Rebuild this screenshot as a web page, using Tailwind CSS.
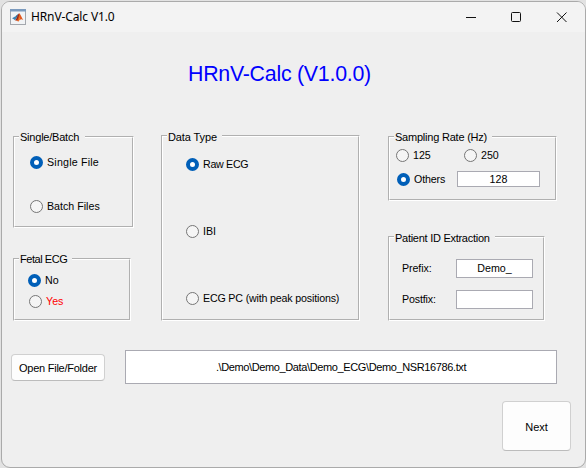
<!DOCTYPE html>
<html lang="en">
<head>
<meta charset="utf-8">
<title>HRnV-Calc V1.0</title>
<script src="https://cdn.jsdelivr.net/npm/@tailwindcss/browser@4"></script>
</head>
<body class="h-[468px] w-[586px] overflow-hidden bg-[#e2e2e2] pt-px pl-px font-['Liberation_Sans',Arial,sans-serif] text-[11px] leading-[13px] text-black">
<div class="flex h-[467px] w-[585px] flex-col overflow-hidden rounded-[9px] border border-[#aaaaaa] bg-[#efefef]">
  <!-- title bar -->
  <header class="flex h-[30px] shrink-0 items-center bg-[#f3f3f3] pl-2">
    <svg class="size-4 shrink-0" viewBox="0 0 16 16">
      <rect x=".5" y=".5" width="15" height="15" fill="#f1f3f5" stroke="#a3a7ad"/>
      <rect width="16" height="2.5" fill="#7b9abd"/>
      <path d="M2 9.3 5.5 7.2 7.2 8.8 5 11.3 3.8 10.3Z" fill="#3d83b5"/>
      <path d="M5.5 7.2 8.6 4.5 7.2 9Z" fill="#276a93"/>
      <path d="M5 11.3C7 10.5 7.4 5.5 9.2 4.2 10.8 5.5 11.6 8.8 13.4 11.3 11.5 9.8 10.5 9.7 8.2 12.8 7.4 11.4 6.5 11 5 11.3Z" fill="#e2571d"/>
      <path d="M5 11.3C7 10.5 7.7 5.8 9.2 4.2 8.8 7.4 8.2 10 6.8 11.6Z" fill="#8e2417"/>
      <path d="M9.2 4.8C9.8 7 9.4 10 8.2 12.2L9.9 10.3Z" fill="#f6a52c"/>
    </svg>
    <span class="ml-[5px] font-['Noto_Sans',sans-serif] text-[12px] leading-4 tracking-[-0.12px]">HRnV-Calc V1.0</span>
    <svg class="mr-[17px] ml-auto h-[12px] w-[102px]" viewBox="0 0 102 12" fill="none" stroke="#111">
      <path d="M0 6.5H10" shape-rendering="crispEdges"/>
      <rect x="45.5" y="1.5" width="9" height="9" rx="1"/>
      <path d="M91 1.5 100.5 11M100.5 1.5 91 11"/>
    </svg>
  </header>

  <main class="flex flex-col">
    <h1 class="mt-[30px] ml-[186px] text-[21.33px] leading-[25px] tracking-[-0.24px] whitespace-nowrap text-[#0000ff]">HRnV-Calc (V1.0.0)</h1>

    <div class="mt-[48px] flex items-end pl-[11px]">
      <div class="flex flex-col gap-[30px]">
        <section class="relative h-[92px] w-[121px] border border-[#b0b0b0] border-r-white border-b-white">
          <h2 class="absolute -top-[6px] left-[5px] w-[66px] bg-[#efefef] pl-px tracking-[-0.22px] whitespace-nowrap">Single/Batch</h2>
          <div class="h-full border border-white border-r-[#b0b0b0] border-b-[#b0b0b0] pt-[18px] pl-[15px] text-[10.67px]">
            <label class="flex items-center gap-1 tracking-[0.2px]"><i class="size-[13px] rounded-full border-4 border-[#005fb8] bg-white"></i>Single File</label>
            <label class="mt-[31px] flex items-center gap-1"><i class="size-[13px] rounded-full border border-[#767676] bg-[#f5f5f5]"></i>Batch Files</label>
          </div>
        </section>
        <section class="relative h-[63px] w-[118px] border border-[#b0b0b0] border-r-white border-b-white">
          <h2 class="absolute -top-[6px] left-[5px] w-[53px] bg-[#efefef] pl-px tracking-[-0.45px] whitespace-nowrap">Fetal ECG</h2>
          <div class="h-full border border-white border-r-[#b0b0b0] border-b-[#b0b0b0] pt-[14px] pl-[13px] text-[10.67px]">
            <label class="flex items-center gap-1"><i class="size-[13px] rounded-full border-4 border-[#005fb8] bg-white"></i>No</label>
            <label class="mt-[8px] ml-px flex items-center gap-1 text-[#ff0000]"><i class="size-[13px] rounded-full border border-[#767676] bg-[#f5f5f5]"></i>Yes</label>
          </div>
        </section>
      </div>

      <section class="relative ml-[27px] h-[186px] w-[199px] border border-[#b0b0b0] border-r-white border-b-white">
        <h2 class="absolute -top-[5px] left-[5px] w-[55px] bg-[#efefef] pl-px tracking-[-0.1px] whitespace-nowrap">Data Type</h2>
        <div class="h-full border border-white border-r-[#b0b0b0] border-b-[#b0b0b0] pt-[21px] pl-[23px] text-[10.67px]">
          <label class="flex items-center gap-1 tracking-[-0.3px]"><i class="size-[13px] rounded-full border-4 border-[#005fb8] bg-white"></i>Raw ECG</label>
          <label class="mt-[54px] flex items-center gap-1"><i class="size-[13px] rounded-full border border-[#767676] bg-[#f5f5f5]"></i>IBI</label>
          <label class="mt-[54px] flex items-center gap-1 tracking-[-0.17px] whitespace-nowrap"><i class="size-[13px] rounded-full border border-[#767676] bg-[#f5f5f5]"></i>ECG PC (with peak positions)</label>
        </div>
      </section>

      <div class="ml-[28px] flex flex-col gap-[35px]">
        <section class="relative h-[65px] w-[169px] border border-[#b0b0b0] border-r-white border-b-white">
          <h2 class="absolute -top-[6px] left-[5px] w-[98px] bg-[#efefef] pl-px tracking-[-0.22px] whitespace-nowrap">Sampling Rate (Hz)</h2>
          <div class="h-full border border-white border-r-[#b0b0b0] border-b-[#b0b0b0] pt-[11px] pl-[6px] text-[10.67px]">
            <div class="flex">
              <label class="flex w-[68px] items-center gap-1"><i class="size-[13px] rounded-full border border-[#767676] bg-[#f5f5f5]"></i>125</label>
              <label class="flex items-center gap-1"><i class="size-[13px] rounded-full border border-[#767676] bg-[#f5f5f5]"></i>250</label>
            </div>
            <div class="mt-[9px] flex items-center">
              <label class="ml-px flex w-[60px] items-center gap-1 tracking-[-0.15px]"><i class="size-[13px] rounded-full border-4 border-[#005fb8] bg-white"></i>Others</label>
              <div class="h-4 w-[83px] border border-[#aaaab2] bg-white pt-px text-center">128</div>
            </div>
          </div>
        </section>
        <section class="relative h-[85px] w-[157px] border border-[#b0b0b0] border-r-white border-b-white">
          <h2 class="absolute -top-[5px] left-[5px] w-[101px] bg-[#efefef] pl-px tracking-[-0.27px] whitespace-nowrap">Patient ID Extraction</h2>
          <div class="h-full border border-white border-r-[#b0b0b0] border-b-[#b0b0b0] pt-[21px] pl-3 text-[10.67px]">
            <div class="flex items-center"><span class="w-[54px] tracking-[-0.1px]">Prefix:</span><div class="h-[19px] w-[77px] border border-[#aaaab2] bg-white pt-[2px] text-center">Demo_</div></div>
            <div class="mt-3 flex items-center"><span class="w-[54px] tracking-[-0.15px]">Postfix:</span><div class="h-[19px] w-[77px] border border-[#aaaab2] bg-white"></div></div>
          </div>
        </section>
      </div>
    </div>

    <div class="mt-[29px] flex items-start pl-[9px]">
      <button class="mt-1 h-[27px] w-[94px] rounded-[4px] border border-[#d0d0d0] border-b-[#bcbcbc] bg-[#fdfdfd] pt-px tracking-[-0.25px] whitespace-nowrap">Open File/Folder</button>
      <div class="ml-[20px] h-[34px] w-[432px] border border-[#aaaab2] bg-white pt-[10px] text-center tracking-[-0.38px]">.\Demo\Demo_Data\Demo_ECG\Demo_NSR16786.txt</div>
    </div>
    <button class="mt-[17px] ml-[500px] h-[50px] w-[69px] rounded-[4px] border border-[#d0d0d0] border-b-[#bcbcbc] bg-[#fdfdfd] pt-[2px]">Next</button>
  </main>
</div>
</body>
</html>
